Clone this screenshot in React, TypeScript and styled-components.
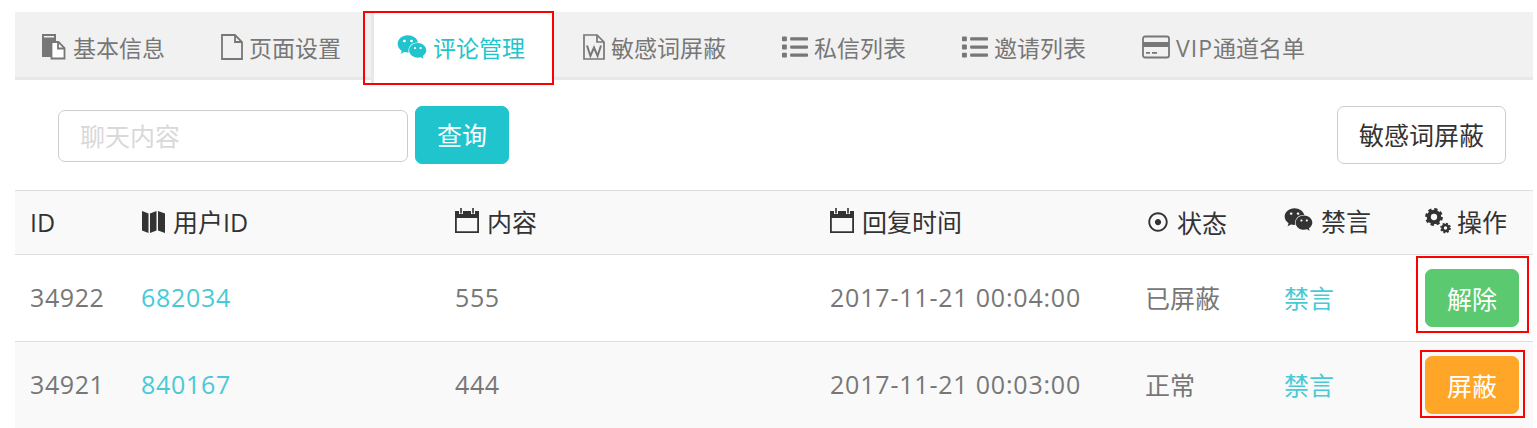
import React from "react";
import styled, { createGlobalStyle } from "styled-components";
import { FaWeixin, FaList, FaRegDotCircle } from "react-icons/fa";

const Global = createGlobalStyle`
  html, body { margin: 0; padding: 0; background: #fff; }
  body { font-family: "Open Sans", "Noto Sans CJK SC", sans-serif; overflow: hidden; }
`;

const Page = styled.div`
  height: 428px;
  padding: 12px 4px 0 15px;
  box-sizing: border-box;
  overflow: hidden;
`;

const TabBar = styled.nav`
  display: flex;
  gap: 3px;
  height: 68px;
  background: #f1f1f1;
  border-bottom: 3px solid #e8e8e8;
  box-sizing: border-box;
`;

const Tab = styled.a<{ $active?: boolean }>`
  position: relative;
  display: flex;
  align-items: center;
  gap: 6px;
  height: ${(p) => (p.$active ? "71px" : "65px")};
  padding: 4px ${(p) => (p.$active ? "29px" : "27px")} ${(p) => (p.$active ? "6px" : "0")} 23px;
  box-sizing: border-box;
  border-left: 3px solid ${(p) => (p.$active ? "#e8e8e8" : "transparent")};
  background: ${(p) => (p.$active ? "#fff" : "transparent")};
  color: ${(p) => (p.$active ? "#1fc4cd" : "#777")};
  font-size: 23px;
  white-space: nowrap;
`;

const TabLabel = styled.span``;

const Callout = styled.span<{ $l: number; $t: number; $r: number; $b: number }>`
  position: absolute;
  left: ${(p) => p.$l}px;
  top: ${(p) => p.$t}px;
  right: ${(p) => p.$r}px;
  bottom: ${(p) => p.$b}px;
  border: 2px solid #f00;
  pointer-events: none;
`;

const Toolbar = styled.div`
  display: flex;
  justify-content: space-between;
  align-items: center;
  height: 110px;
  padding: 0 27px 0 43px;
`;

const Search = styled.div`
  display: flex;
  align-items: center;
  gap: 7px;
`;

const SearchInput = styled.input`
  width: 350px;
  height: 52px;
  margin-top: 2px;
  box-sizing: border-box;
  padding: 0 21px;
  border: 1px solid #ccc;
  border-radius: 7px;
  font: inherit;
  font-size: 25px;
  color: #555;
  outline: none;
  &::placeholder { color: #d9d9d9; opacity: 1; }
`;

const Button = styled.button<{ $bg?: string; $lift?: number }>`
  height: 58px;
  padding: 0 21px ${(p) => p.$lift ?? 0}px;
  border: 1px solid ${(p) => p.$bg ?? "#ccc"};
  border-radius: 7px;
  background: ${(p) => p.$bg ?? "#fff"};
  color: ${(p) => (p.$bg ? "#fff" : "#333")};
  font: inherit;
  font-size: 25px;
  position: relative;
  white-space: nowrap;
`;

const Table = styled.table`
  width: 1518px;
  border-collapse: collapse;
  table-layout: fixed;
  font-size: 25px;
`;

const HeadRow = styled.tr`
  height: 64px;
  background: #f9f9f9;
  border-top: 1px solid #ddd;
  border-bottom: 1px solid #ddd;
`;

const Th = styled.th`
  padding: 0 0 2px 15px;
  font-weight: 400;
  text-align: left;
  color: #333;
  white-space: nowrap;
`;

const HeadLabel = styled.span<{ $gap?: number; $inset?: number }>`
  display: inline-flex;
  align-items: center;
  gap: ${(p) => p.$gap ?? 7}px;
  margin-left: ${(p) => p.$inset ?? 0}px;
`;

const Row = styled.tr<{ $alt?: boolean }>`
  height: 87px;
  background: ${(p) => (p.$alt ? "#f9f9f9" : "#fff")};
  border-bottom: 1px solid #ddd;
`;

const Td = styled.td`
  padding: 0 0 2px 15px;
  color: #777;
  white-space: nowrap;
`;

const ActionCell = styled(Td)`
  padding-bottom: 0;
`;

const Link = styled.a`
  color: #48cad6;
`;

const Digits = styled.span<{ $s: number }>`
  letter-spacing: ${(p) => p.$s}px;
`;

const CopyIcon = () => (
  <svg width="26" height="27" viewBox="0 0 26 27">
    <path fill="#777" d="M1 1h14v7h-4v16H1z" />
    <path fill="#f1f1f1" d="M3 3h10v1.500H3z" />
    <path fill="#fff" stroke="#777" strokeWidth="1.800" d="M10.500 9h7l6 6v10.500h-13z" />
    <path fill="none" stroke="#777" strokeWidth="1.800" d="M17 9v6.500h6.500" />
  </svg>
);

const FileIcon = () => (
  <svg width="22" height="26" viewBox="0 0 22 26" fill="none" stroke="#777" strokeWidth="1.800">
    <path d="M1 1h13l7 7v17H1z" />
    <path d="M14 1v7h7" />
  </svg>
);

const CalendarIcon = () => (
  <svg width="24" height="25" viewBox="0 0 24 25">
    <path fill="#333" fillRule="evenodd" d="M0 3h24v22H0zM1.800 10v13.200h20.400V10z" />
    <path fill="#f9f9f9" d="M4 0h4v6H4zM16 0h4v6h-4z" />
    <path fill="#333" d="M5.200 0h1.600v5.500H5.200zM17.200 0h1.600v5.500h-1.600z" />
  </svg>
);

const WordIcon = () => (
  <svg width="22" height="26" viewBox="0 0 22 26" fill="none" stroke="#777" strokeWidth="1.700">
    <path d="M1 1h13l7 7v17H1z" />
    <path d="M14 1v7h7" />
    <path d="M4 11.500l3.400 10.500 3.600-8.500 3.600 8.500 3.400-10.500" strokeWidth="2" />
  </svg>
);

const MapIcon = () => (
  <svg width="23" height="23" viewBox="0 0 23 23" fill="#333">
    <path d="M0 1l6.500 2.500V23L0 20.500z" />
    <path d="M8 3.500L14.500 1v19.500L8 23z" />
    <path d="M16 1l7 2.500V23l-7-2.500z" />
  </svg>
);

const CardIcon = () => (
  <svg width="28" height="24" viewBox="0 0 28 24">
    <rect x="1" y="1.500" width="26" height="21" rx="2" fill="none" stroke="#777" strokeWidth="1.800" />
    <path fill="#777" d="M1 7h26v5H1zM4 17h4v1.800H4zM10 17h5v1.800h-5z" />
  </svg>
);

const Gear = ({ cx, cy, r, w, teeth }: { cx: number; cy: number; r: number; w: number; teeth: number }) => {
  const toothR = r + w * 0.55;
  const step = (2 * Math.PI * toothR) / teeth;
  return (
    <g fill="none" stroke="#333">
      <circle cx={cx} cy={cy} r={r} strokeWidth={w} />
      <circle cx={cx} cy={cy} r={toothR} strokeWidth={w * 0.7} strokeDasharray={`${step * 0.55} ${step * 0.45}`} />
    </g>
  );
};

const CogsIcon = () => (
  <svg width="26" height="26" viewBox="0 0 26 26">
    <Gear cx={9} cy={9} r={5.200} w={4.100} teeth={8} />
    <Gear cx={20.500} cy={20} r={3} w={2.600} teeth={8} />
  </svg>
);

const tabs = [
  { label: <TabLabel>基本信息</TabLabel>, icon: <CopyIcon /> },
  { label: <TabLabel>页面设置</TabLabel>, icon: <FileIcon /> },
  { label: <TabLabel>评论管理</TabLabel>, icon: <FaWeixin size={30} />, active: true },
  { label: <TabLabel>敏感词屏蔽</TabLabel>, icon: <WordIcon /> },
  { label: <TabLabel>私信列表</TabLabel>, icon: <FaList size={26} /> },
  { label: <TabLabel>邀请列表</TabLabel>, icon: <FaList size={26} /> },
  { label: <TabLabel><Digits $s={1}>VIP</Digits>通道名单</TabLabel>, icon: <CardIcon /> },
];

export default function App() {
  return (
    <Page>
      <Global />
      <TabBar>
        {tabs.map((t, i) => (
          <Tab key={i} $active={t.active}>
            {t.icon}
            {t.label}
            {t.active && <Callout $l={-11} $t={-1} $r={0} $b={-2} />}
          </Tab>
        ))}
      </TabBar>
      <Toolbar>
        <Search>
          <SearchInput placeholder="聊天内容" />
          <Button $bg="#1fc4cd" $lift={3}>查询</Button>
        </Search>
        <Button $lift={3}>敏感词屏蔽</Button>
      </Toolbar>
      <Table>
        <colgroup>
          <col width="111" />
          <col width="314" />
          <col width="375" />
          <col width="315" />
          <col width="139" />
          <col width="141" />
          <col width="123" />
        </colgroup>
        <thead>
          <HeadRow>
            <Th>ID</Th>
            <Th><HeadLabel $gap={8} $inset={1}><MapIcon />用户ID</HeadLabel></Th>
            <Th><HeadLabel $gap={8}><CalendarIcon />内容</HeadLabel></Th>
            <Th><HeadLabel $gap={8}><CalendarIcon />回复时间</HeadLabel></Th>
            <Th><HeadLabel $gap={9} $inset={3}><FaRegDotCircle size={20} />状态</HeadLabel></Th>
            <Th><HeadLabel $gap={8}><FaWeixin size={29} />禁言</HeadLabel></Th>
            <Th><HeadLabel $gap={6}><CogsIcon />操作</HeadLabel></Th>
          </HeadRow>
        </thead>
        <tbody>
          <Row>
            <Td><Digits $s={0.6}>34922</Digits></Td>
            <Td><Link><Digits $s={0.7}>682034</Digits></Link></Td>
            <Td><Digits $s={0.6}>555</Digits></Td>
            <Td><Digits $s={0.8}>2017-11-21 00:04:00</Digits></Td>
            <Td>已屏蔽</Td>
            <Td><Link>禁言</Link></Td>
            <ActionCell>
              <Button $bg="#5bc970">解除<Callout $l={-10} $t={-14} $r={-11} $b={-7} /></Button>
            </ActionCell>
          </Row>
          <Row $alt>
            <Td><Digits $s={0.6}>34921</Digits></Td>
            <Td><Link><Digits $s={0.7}>840167</Digits></Link></Td>
            <Td><Digits $s={0.6}>444</Digits></Td>
            <Td><Digits $s={0.8}>2017-11-21 00:03:00</Digits></Td>
            <Td>正常</Td>
            <Td><Link>禁言</Link></Td>
            <ActionCell>
              <Button $bg="#ffa628">屏蔽<Callout $l={-6} $t={-7} $r={-7} $b={-5} /></Button>
            </ActionCell>
          </Row>
        </tbody>
      </Table>
    </Page>
  );
}
